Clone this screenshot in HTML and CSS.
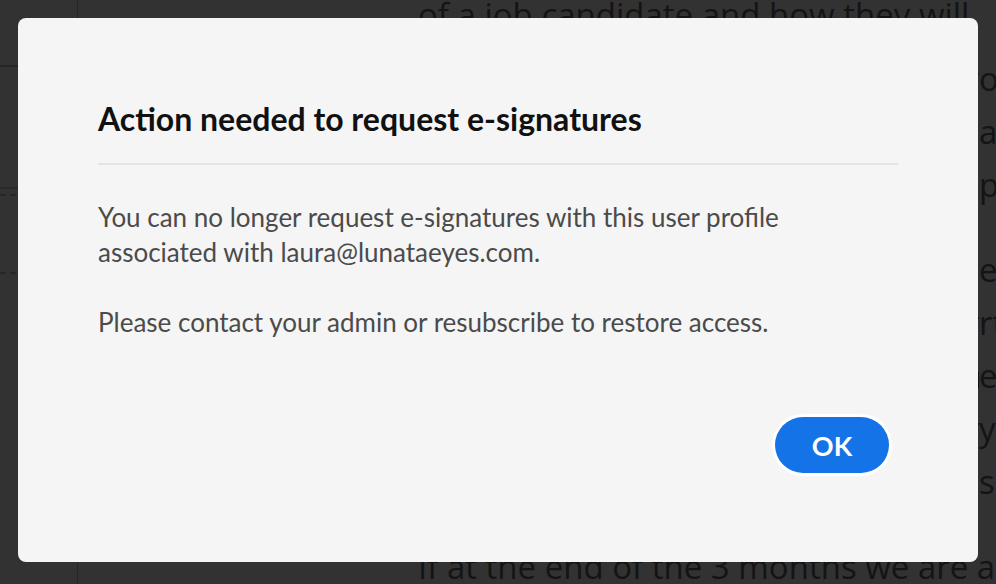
FILE: index.html
```html
<!DOCTYPE html>
<html lang="en">
<head>
<meta charset="utf-8">
<title>Action needed</title>
<link rel="stylesheet" href="styles.css">
</head>
<body>
<div class="backdrop">
  <aside class="sidebar">
    <div class="side-top"></div>
    <div class="side-rule"></div>
    <div class="side-dash"></div>
    <div class="side-gap"></div>
    <div class="side-dash"></div>
  </aside>
  <main class="doc">
    <p class="doc-lead">of a job candidate and how they will</p>
    <div class="doc-para">
      <div class="doc-line"><span class="doc-fill">contribute to the team over the course</span><span>of</span></div>
      <div class="doc-line"><span class="doc-fill">first weeks on the job. We also plan</span><span>around</span></div>
      <div class="doc-line"><span class="doc-fill">a structured review to help the new</span><span>people</span></div>
    </div>
    <div class="doc-para">
      <div class="doc-line"><span class="doc-fill">Each manager will be asked to share</span><span>each</span></div>
      <div class="doc-line"><span class="doc-fill">on the progress of the new starter, sta</span><span>rt</span></div>
      <div class="doc-line"><span class="doc-fill">and share notes with the wider team</span><span>every</span></div>
      <div class="doc-line"><span class="doc-fill">so that everybody can stay in sync and</span><span>you</span></div>
      <div class="doc-line"><span class="doc-fill">with the goals and keep the results</span><span>such</span></div>
    </div>
    <p class="doc-para">If at the end of the 3 months we are a</p>
  </main>
</div>

<div class="dialog" role="dialog" aria-labelledby="dlg-title">
  <h2 class="dialog-title" id="dlg-title">Action needed to request e-signatures</h2>
  <hr class="dialog-divider">
  <div class="dialog-body">
    <p>You can no longer request e-signatures with this user profile associated with laura@lunataeyes.com.</p>
    <p>Please contact your admin or resubscribe to restore access.</p>
  </div>
  <div class="dialog-actions">
    <button class="btn-ok" type="button">OK</button>
  </div>
</div>
</body>
</html>
```

FILE: styles.css
```css
* { box-sizing: border-box; }

html, body {
  margin: 0;
  padding: 0;
  width: 996px;
  height: 584px;
  overflow: hidden;
}

body {
  background: #323232;
  font-family: Lato, "Open Sans", sans-serif;
  position: relative;
}

.backdrop {
  display: flex;
  height: 584px;
}

.sidebar {
  width: 78px;
  flex: none;
  border-right: 1px solid #262626;
  display: flex;
  flex-direction: column;
}

.side-top {
  height: 67px;
  border-bottom: 2px solid #262626;
}

.side-rule {
  height: 122px;
  border-bottom: 2px solid #2a2a2a;
}

.side-dash {
  height: 7px;
  border-bottom: 2px dashed #262626;
}

.side-gap {
  height: 71px;
}

.doc {
  padding-left: 340px;
  flex: 1;
  overflow: hidden;
}

.doc-lead,
.doc-para {
  font-family: "Open Sans", sans-serif;
  font-size: 33px;
  line-height: 53px;
  color: #141414;
  white-space: nowrap;
}

.doc-lead {
  margin: -12px 0 11px;
}

.doc-para {
  margin: 0 0 32px;
}

.doc-line {
  display: flex;
}

.doc-fill {
  flex: none;
  width: 561px;
  overflow: hidden;
}

.dialog {
  position: absolute;
  left: 18px;
  top: 18px;
  width: 960px;
  height: 544px;
  background: #f5f5f5;
  border-radius: 8px;
  padding: 83px 80px 0;
  display: flex;
  flex-direction: column;
}

.dialog-title {
  margin: 0;
  font-family: Lato, sans-serif;
  font-weight: 700;
  font-size: 32px;
  line-height: 36px;
  color: #111;
}

.dialog-divider {
  margin: 26px 0 0;
  border: 0;
  height: 2px;
  background: #e4e4e4;
}

.dialog-body {
  margin-top: 35px;
  max-width: 700px;
  font-size: 26px;
  line-height: 35px;
  color: #4b4b4b;
}

.dialog-body p {
  margin: 0 0 35px;
}

.dialog-body p:last-child {
  margin-bottom: 0;
}

.dialog-actions {
  margin-top: 77px;
  display: flex;
  justify-content: flex-end;
  padding-right: 9px;
}

.btn-ok {
  width: 114px;
  height: 56px;
  border: 0;
  border-radius: 28px;
  background: #1473e6;
  box-shadow: 0 0 0 3px #ffffff;
  color: #ffffff;
  font-family: Lato, sans-serif;
  font-weight: 700;
  font-size: 27px;
  padding: 0;
}
```
